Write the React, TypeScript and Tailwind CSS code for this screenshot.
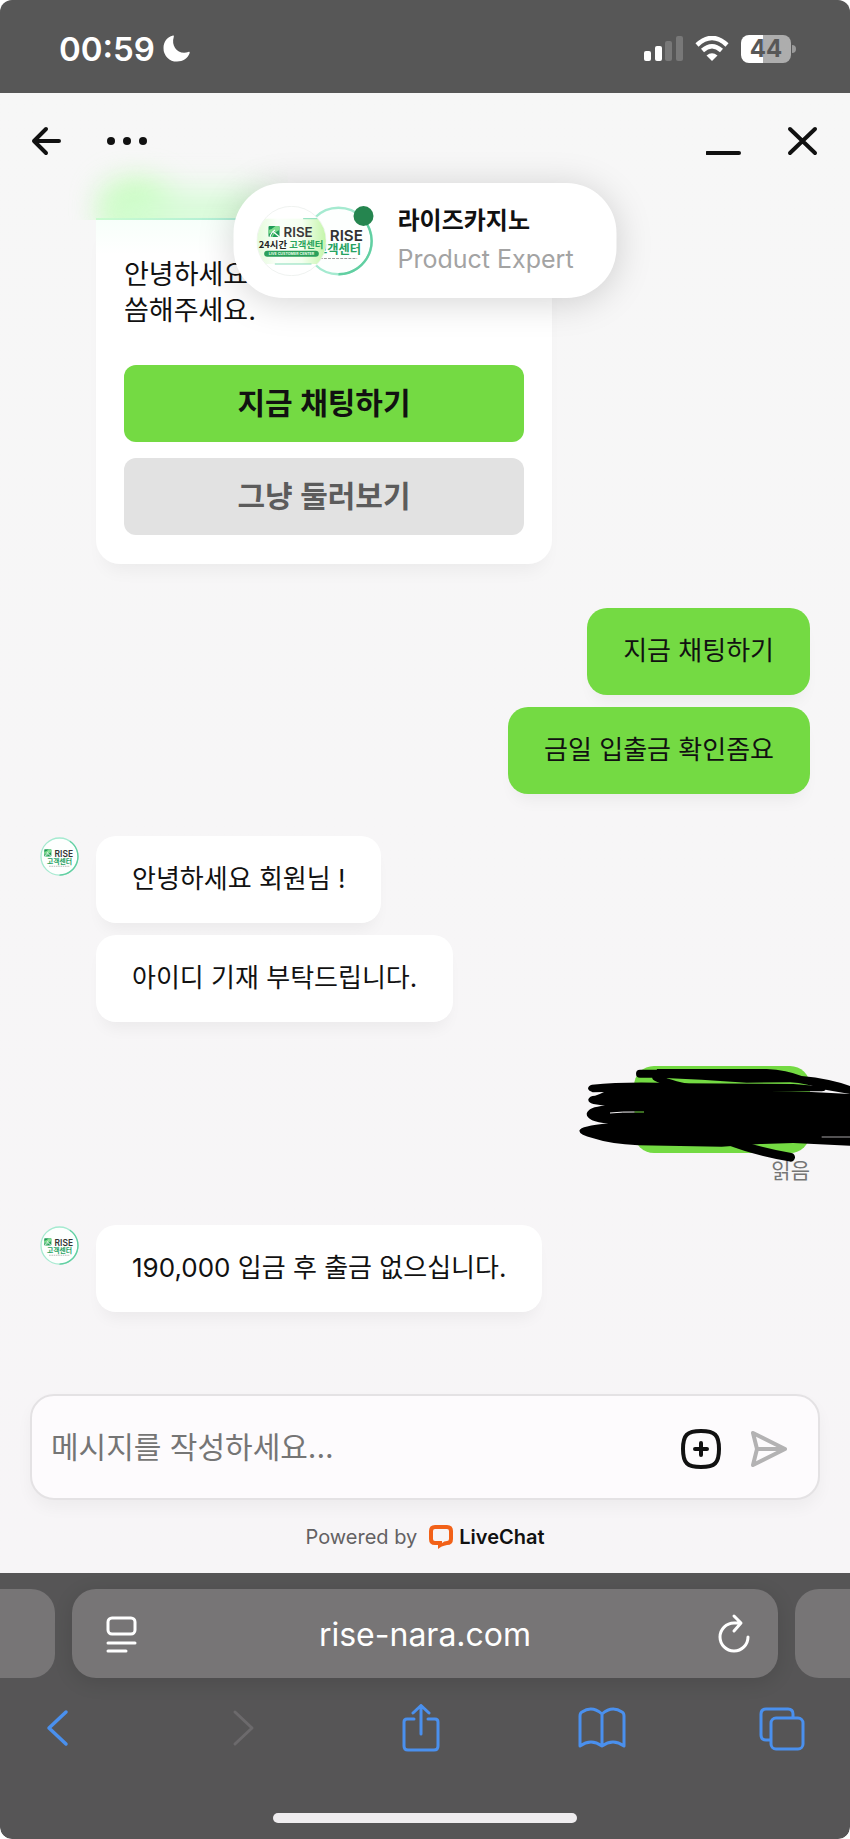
import type { ReactNode } from "react";

const AGENT_MESSAGES = ["안녕하세요 회원님 !", "아이디 기재 부탁드립니다."];
const USER_MESSAGES = ["지금 채팅하기", "금일 입출금 확인좀요"];

function LeafMark() {
  return (
    <>
      <path d="M0 2Q0 0 2 0H20Q22 0 22 2V20Q22 22 20 22H2Q0 22 0 20Z" fill="#1f9a57" />
      <path d="M0 8Q8 6 14 0H20Q22 0 22 2V8Q12 12 8 22H5Q8 14 14 9Q7 12 0 16Z" fill="#7fdc8f" />
      <path d="M3 22Q5 13 13 8M9 11L22 22" stroke="#fff" strokeWidth="2.5" fill="none" />
    </>
  );
}

function CenterAvatar({ className }: { className: string }) {
  return (
    <svg viewBox="0 0 120 120" className={className} role="img" aria-label="RISE 고객센터">
      <circle cx="60" cy="60" r="57" fill="#fdfffe" stroke="#a5ead0" strokeWidth="4" />
      <path d="M92 13A57 57 0 0 1 60 117" fill="none" stroke="#62cfa2" strokeWidth="4" />
      <g transform="translate(13 38)">
        <LeafMark />
      </g>
      <text x="45" y="60" fontSize="26" fontWeight="600" fill="#333" className="font-['Inter',sans-serif]">RISE</text>
      <text x="60" y="82" fontSize="21" fontWeight="700" fill="#27a262" textAnchor="middle" className="font-['Noto_Sans_CJK_KR',sans-serif]">고객센터</text>
      <path d="M28 90H92" stroke="#9a9a9a" strokeWidth="2" strokeDasharray="5 2" />
    </svg>
  );
}

function LiveAvatar() {
  return (
    <svg viewBox="0 0 210 210" className="size-[70px]" role="img" aria-label="RISE 24시간 고객센터">
      <defs>
        <clipPath id="live-clip">
          <circle cx="105" cy="105" r="103" />
        </clipPath>
        <linearGradient id="live-bg" x1="0" x2="1">
          <stop offset="0" stopColor="#e3fbd9" />
          <stop offset=".3" stopColor="#fbfffa" />
          <stop offset=".65" stopColor="#f4fff0" />
          <stop offset="1" stopColor="#c3f5a8" />
        </linearGradient>
      </defs>
      <circle cx="105" cy="105" r="104" fill="#fff" stroke="#e7ece9" strokeWidth="2" />
      <g clipPath="url(#live-clip)">
        <rect y="38" width="210" height="136" fill="url(#live-bg)" />
        <path d="M140 38H210M55 174H165" stroke="#86dcb9" strokeWidth="3" />
      </g>
      <g transform="translate(36 60) scale(1.5)">
        <LeafMark />
      </g>
      <text x="81" y="92" fontSize="40" fontWeight="600" fill="#3a3a3a" className="font-['Inter',sans-serif]">RISE</text>
      <text x="7" y="125" fontSize="28" fontWeight="700" fill="#222" className="font-['Noto_Sans_CJK_KR',sans-serif]">
        24시간 <tspan fill="#2aa45c">고객센터</tspan>
      </text>
      <rect x="23" y="134" width="164" height="18" rx="9" fill="#2ba05b" />
      <text x="105" y="147" fontSize="11" fontWeight="700" fill="#e9ffe9" textAnchor="middle" className="font-['Inter',sans-serif]">LIVE CUSTOMER CENTER</text>
    </svg>
  );
}

function StatusBar() {
  return (
    <div className="flex h-[93px] items-center justify-between bg-[#575757] pt-1 pr-[54px] pl-[59px]">
      <div className="flex items-center gap-2 text-white">
        <time className="text-[33px] leading-10 font-semibold">00:59</time>
        <svg viewBox="0 0 27 27" className="size-[27px]" aria-hidden="true">
          <path d="M10 0.5C4 2 .5 7 .5 13A13.2 13.2 0 0 0 14 26.5C20 26.5 25 23 26.7 18C26.8 17 26.2 16.6 25.4 17C16 20.5 7.5 12 10.8 1.8C11 .8 10.7 .3 10 .5Z" fill="currentColor" />
        </svg>
      </div>
      <div className="flex items-center gap-3">
        <svg viewBox="0 0 39 25" className="h-[25px] w-[39px]" aria-hidden="true">
          <rect x="0" y="15" width="7" height="10" rx="2" fill="#fff" />
          <rect x="11" y="10" width="7" height="15" rx="2" fill="#fff" />
          <rect x="21" y="5" width="7" height="20" rx="2" fill="#787878" />
          <rect x="32" y="0" width="7" height="25" rx="2" fill="#787878" />
        </svg>
        <svg viewBox="0 0 34 25" className="h-[25px] w-[34px]" aria-hidden="true">
          <path d="M2 9Q17 -5 32 9" fill="none" stroke="#fff" strokeWidth="4.5" />
          <path d="M7.5 14.5Q17 6 26.5 14.5" fill="none" stroke="#fff" strokeWidth="4.5" />
          <path d="M17 25L11.5 19.5Q17 15 22.5 19.5Z" fill="#fff" />
        </svg>
        <div className="flex items-center gap-px">
          <div className="flex h-7 w-[50px] items-center justify-center rounded-lg bg-linear-to-r from-white from-44% to-[#adadad] to-44% text-2xl font-bold text-[#575757]">
            44
          </div>
          <div className="h-2 w-1 rounded-r-full bg-[#9a9a9a]" />
        </div>
      </div>
    </div>
  );
}

function ChatHeader() {
  return (
    <header className="flex h-24 items-center justify-between pr-7 pl-7 text-[#111]">
      <div className="flex items-center gap-[43px]">
        <button type="button" aria-label="뒤로">
          <svg viewBox="0 0 36 36" className="size-9" fill="none" stroke="currentColor" strokeWidth="4" strokeLinecap="round" strokeLinejoin="round">
            <path d="M31 18H6M18 6L6 18L18 30" />
          </svg>
        </button>
        <button type="button" aria-label="메뉴">
          <svg viewBox="0 0 40 36" className="h-9 w-10" fill="currentColor">
            <circle cx="4" cy="18" r="4" />
            <circle cx="20" cy="18" r="4" />
            <circle cx="36" cy="18" r="4" />
          </svg>
        </button>
      </div>
      <div className="flex items-center gap-11">
        <button type="button" aria-label="최소화">
          <svg viewBox="0 0 36 36" className="size-9" fill="none" stroke="currentColor" strokeWidth="4" strokeLinecap="round">
            <path d="M1 30H33" />
          </svg>
        </button>
        <button type="button" aria-label="닫기">
          <svg viewBox="0 0 36 36" className="size-9" fill="none" stroke="currentColor" strokeWidth="4" strokeLinecap="round">
            <path d="M4 6L29 30M29 6L4 30" />
          </svg>
        </button>
      </div>
    </header>
  );
}

function AgentPill() {
  return (
    <div className="absolute top-[90px] left-1/2 flex h-[115px] w-[383px] -translate-x-1/2 items-center rounded-[50px] bg-white pl-[23px] shadow-[0_4px_36px_rgba(0,0,0,0.17)]">
      <div className="relative flex w-[117px] flex-none">
        <div className="relative z-10 flex-none">
          <LiveAvatar />
        </div>
        <div className="-ml-[23px] flex-none">
          <CenterAvatar className="size-[70px]" />
        </div>
        <span className="absolute top-0 right-0 z-20 size-5 rounded-full bg-[#25854f]" />
      </div>
      <div className="ml-6 pt-px">
        <p className="text-2xl leading-9 font-bold text-[#111]">라이즈카지노</p>
        <p className="text-[25px] leading-10 text-[#a3a3a3]">Product Expert</p>
      </div>
    </div>
  );
}

function Bubble({ mine = false, children }: { mine?: boolean; children: ReactNode }) {
  return (
    <p
      className={`flex min-h-[87px] items-center rounded-[20px] px-9 pb-0.5 text-[26px] leading-9 text-[#111] shadow-[0_12px_16px_-6px_rgba(0,0,0,0.05)] ${
        mine ? "bg-[#74da43]" : "bg-white"
      }`}
    >
      {children}
    </p>
  );
}

function AgentGroup({ messages }: { messages: string[] }) {
  return (
    <div className="flex items-start gap-[17px] pl-10">
      <CenterAvatar className="mt-px size-[39px] flex-none" />
      <div className="flex flex-col items-start gap-3">
        {messages.map((message) => (
          <Bubble key={message}>{message}</Bubble>
        ))}
      </div>
    </div>
  );
}

function Scribble() {
  return (
    <svg viewBox="0 0 870 480" className="absolute -top-[26px] -right-10 h-40 w-[290px]" aria-hidden="true">
      <path d="M290 87H620Q680 90 725 108Q810 116 870 138V162L800 150Q740 130 690 127L560 128Q420 118 300 113Z" />
      <path d="M240 101H310" stroke="#000" strokeWidth="24" strokeLinecap="round" />
      <path d="M288 112Q320 130 400 146" stroke="#000" strokeWidth="22" fill="none" strokeLinecap="round" />
      <path d="M96 134Q200 124 350 130L700 132L798 140Q800 153 785 154L630 154Q760 155 870 162V317L700 309L600 312L485 320L235 316Q150 312 100 295Q57 285 58 272Q62 258 145 250Q80 245 80 221Q85 200 135 197L100 192Q84 188 85 178Q88 168 105 167Q120 162 132 156L98 157Q84 152 84 145Q86 136 96 134Z" />
      <path d="M500 300Q580 332 692 352" stroke="#000" strokeWidth="26" fill="none" strokeLinecap="round" />
      <path d="M150 219Q190 215 224 216" stroke="#f7f5f7" strokeWidth="3" fill="none" />
      <path d="M224 216H252" stroke="#74da43" strokeWidth="3" />
      <path d="M785 291H870" stroke="#f7f5f7" strokeWidth="2" />
    </svg>
  );
}

function Composer() {
  return (
    <form className="mx-[30px] flex h-[106px] items-center rounded-3xl border-2 border-[#e4e2e4] bg-[#fdfbfd] pt-1 pr-[29px] pl-[19px] shadow-[0_8px_16px_rgba(0,0,0,0.04)]">
      <input
        type="text"
        aria-label="메시지"
        placeholder="메시지를 작성하세요..."
        className="h-16 min-w-0 flex-1 bg-transparent pb-1 text-3xl text-[#111] outline-none placeholder:text-[#757575]"
      />
      <button type="button" aria-label="첨부" className="text-[#111]">
        <svg viewBox="0 0 40 40" className="size-10" fill="none" stroke="currentColor" strokeWidth="4" strokeLinecap="round">
          <path d="M20 2C34 2 38 6 38 20S34 38 20 38S2 34 2 20S6 2 20 2Z" />
          <path d="M20 14V26M14 20H26" />
        </svg>
      </button>
      <button type="submit" aria-label="보내기" className="ml-7 text-[#b3b2b3]">
        <svg viewBox="0 0 40 40" className="size-10" fill="none" stroke="currentColor" strokeWidth="4" strokeLinecap="round" strokeLinejoin="round">
          <path d="M4 4L36 20L4 36L8 20ZM8 20H36" />
        </svg>
      </button>
    </form>
  );
}

function BrowserBar() {
  return (
    <footer className="flex flex-col rounded-b-xl bg-[#565556] pt-4 pb-4">
      <div className="flex h-[89px] gap-[17px]">
        <div className="w-[55px] rounded-r-3xl bg-[#777576]" />
        <div className="flex flex-1 items-center justify-between rounded-3xl bg-[#777576] pr-[22px] pl-7 text-white shadow-[0_4px_20px_rgba(0,0,0,0.12)]">
          <button type="button" aria-label="페이지 메뉴">
            <svg viewBox="0 0 44 44" className="size-11" fill="none" stroke="currentColor" strokeWidth="3" strokeLinecap="round">
              <rect x="8" y="6" width="27" height="16" rx="4" />
              <path d="M8 31H35M8 39H26" />
            </svg>
          </button>
          <a href="#" className="pt-0.5 pr-1.5 text-[32px]">rise-nara.com</a>
          <button type="button" aria-label="새로고침">
            <svg viewBox="0 0 44 44" className="size-11" fill="none" stroke="currentColor" strokeWidth="3" strokeLinecap="round" strokeLinejoin="round">
              <path d="M36 25A14 14 0 1 1 22 11H28M22 4L29 11L22 19" />
            </svg>
          </button>
        </div>
        <div className="w-[55px] rounded-l-3xl bg-[#777576]" />
      </div>
      <nav className="flex h-[98px] items-center justify-between pt-0.5 pr-[43px] pl-[35px] text-[#4a90ee]">
        <button type="button" aria-label="이전">
          <svg viewBox="0 0 48 48" className="size-12" fill="none" stroke="currentColor" strokeWidth="3.5" strokeLinecap="round" strokeLinejoin="round">
            <path d="M31 8L14 24L31 40" />
          </svg>
        </button>
        <button type="button" aria-label="다음" disabled className="text-[#6c6a6c]">
          <svg viewBox="0 0 48 48" className="size-12" fill="none" stroke="currentColor" strokeWidth="3" strokeLinecap="round" strokeLinejoin="round">
            <path d="M19 8L36 24L19 40" />
          </svg>
        </button>
        <button type="button" aria-label="공유">
          <svg viewBox="0 0 48 48" className="size-12" fill="none" stroke="currentColor" strokeWidth="3" strokeLinecap="round" strokeLinejoin="round">
            <path d="M17 15H10Q7 15 7 18V42Q7 46 11 46H37Q41 46 41 42V18Q41 15 38 15H31M24 30V2M16 9L24 1.5L32 9" />
          </svg>
        </button>
        <button type="button" aria-label="책갈피">
          <svg viewBox="0 0 48 48" className="size-12" fill="none" stroke="currentColor" strokeWidth="3" strokeLinecap="round" strokeLinejoin="round">
            <path d="M24 10Q14 1 4 8Q2 9 2 12V42Q13 34 24 42Q35 34 46 42V12Q46 9 44 8Q34 1 24 10V42" />
          </svg>
        </button>
        <button type="button" aria-label="탭">
          <svg viewBox="0 0 48 48" className="size-12" fill="none" stroke="currentColor" strokeWidth="3" strokeLinejoin="round">
            <rect x="12" y="14" width="32" height="31" rx="5" />
            <path d="M12 36H7Q2 36 2 31V10Q2 5 7 5H29Q34 5 34 10V14" />
          </svg>
        </button>
      </nav>
      <div className="mt-[37px] h-[10px] w-[304px] self-center rounded-full bg-[#efedef]" />
    </footer>
  );
}

export default function App() {
  return (
    <div className="bg-white font-['Inter','Noto_Sans_CJK_KR',sans-serif]">
      <div className="flex min-h-screen flex-col overflow-hidden rounded-xl">
        <StatusBar />
        <main className="relative flex flex-1 flex-col bg-linear-to-b from-[#f7f7f7] to-[#f7f5f7]">
          <ChatHeader />
          <section className="flex flex-1 flex-col" aria-label="대화">
            <article className="relative ml-24 w-[456px] max-w-full">
              <div className="relative h-[31px]">
                <div className="absolute bottom-0 -left-12 h-[84px] w-60 overflow-hidden">
                  <div className="absolute -bottom-3 left-14 h-12 w-16 rounded-full bg-[#b9ffa8] blur-lg" />
                  <div className="absolute -bottom-3 left-14 h-10 w-44 rounded-full bg-[#d5fcd5] blur-lg" />
                </div>
                <div className="absolute bottom-0 left-0 h-[2px] w-44 bg-linear-to-r from-[#c9fbcf] to-[#a8ead8]" />
              </div>
              <div className="rounded-b-3xl bg-linear-to-b from-[#f7fffa] to-white to-10% px-7 pt-[37px] pb-[29px] shadow-[0_14px_18px_-8px_rgba(0,0,0,0.05)]">
                <p className="text-[27px] leading-9 text-[#111]">
                  안녕하세요
                  <br />
                  씀해주세요.
                </p>
                <div className="mt-9 flex flex-col gap-4 text-3xl font-semibold">
                  <button type="button" className="h-[77px] rounded-xl bg-[#74da43] pb-0.5 text-[#111]">지금 채팅하기</button>
                  <button type="button" className="h-[77px] rounded-xl bg-[#e2e2e2] pb-0.5 text-[#5c5c5c]">그냥 둘러보기</button>
                </div>
              </div>
            </article>

            <div className="mt-11 flex flex-col items-end gap-3 pr-10">
              {USER_MESSAGES.map((message) => (
                <Bubble key={message} mine>{message}</Bubble>
              ))}
            </div>

            <div className="mt-[42px]">
              <AgentGroup messages={AGENT_MESSAGES} />
            </div>

            <div className="mt-11 flex flex-col items-end pr-10">
              <div className="relative">
                <div className="h-[87px] w-44 rounded-[20px] bg-[#74da43]" />
                <Scribble />
              </div>
              <p className="mt-1 text-[21px] leading-7 text-[#757575]">읽음</p>
            </div>

            <div className="mt-10 mb-[82px]">
              <AgentGroup messages={["190,000 입금 후 출금 없으십니다."]} />
            </div>
          </section>

          <Composer />
          <div className="flex h-[73px] items-center justify-center gap-3">
            <span className="text-[20px] text-[#636163]">Powered by</span>
            <a href="#" className="flex items-center gap-[6px] text-[20px] font-semibold text-[#111]">
              <svg viewBox="0 0 24 26" className="h-[26px] w-6" fill="#f26118" fillRule="evenodd" aria-hidden="true">
                <path d="M6 1H18Q24 1 24 7V15Q24 21 18 21Q12 22 9 25V21H6Q0 21 0 15V7Q0 1 6 1ZM6 5Q4 5 4 7V15Q4 17 6 17H13V19Q15 17 18 17Q20 17 20 15V7Q20 5 18 5Z" />
              </svg>
              LiveChat
            </a>
          </div>
          <AgentPill />
        </main>
        <BrowserBar />
      </div>
    </div>
  );
}
